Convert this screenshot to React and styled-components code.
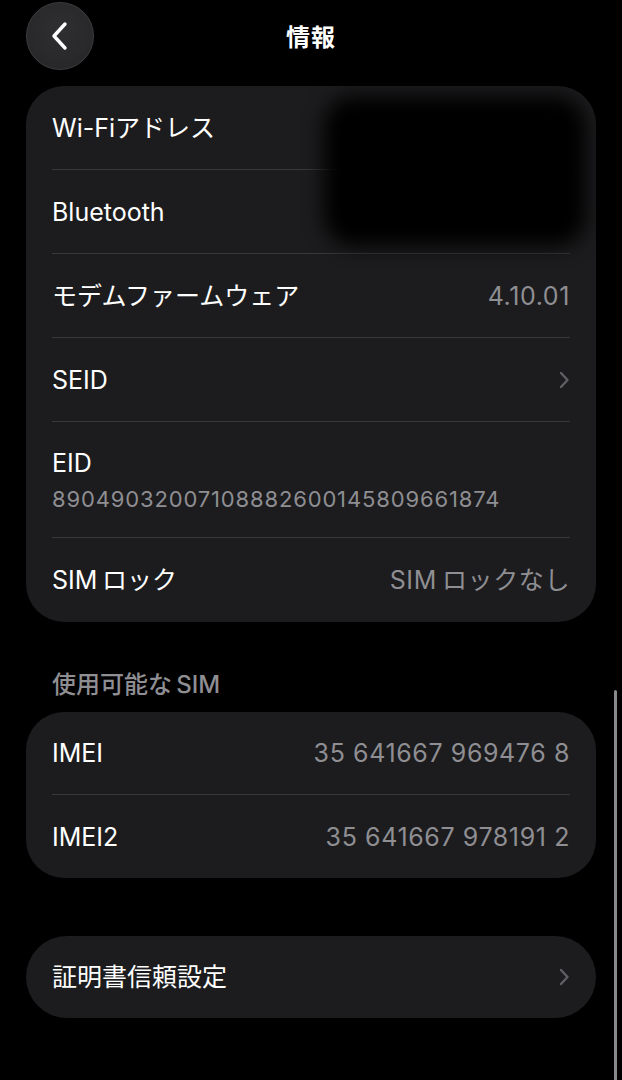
import React from 'react';
import styled, { createGlobalStyle } from 'styled-components';

const Global = createGlobalStyle`
  html, body {
    margin: 0;
    padding: 0;
    background: #000;
  }
  body {
    font-family: Inter, "Noto Sans CJK JP", sans-serif;
    color: #fff;
    -webkit-font-smoothing: antialiased;
  }
`

const Page = styled.div`
  width: 622px;
  min-height: 1080px;
  box-sizing: border-box;
  padding: 1px 26px 0;
  background: #000;
  overflow: hidden;
`

const Header = styled.div`
  display: grid;
  grid-template-columns: 68px 1fr 68px;
  align-items: center;
  height: 69px;
`

const BackButton = styled.button`
  width: 68px;
  height: 68px;
  border-radius: 50%;
  border: 1px solid #3d3d40;
  background: radial-gradient(circle at 50% 40%, #2f2f31 0%, #252527 100%);
  display: flex;
  align-items: center;
  justify-content: center;
  padding: 0;
`

const Title = styled.h1`
  margin: 0;
  text-align: center;
  font-size: 24px;
  font-weight: 700;
  letter-spacing: 1px;
`

const Card = styled.div`
  position: relative;
  background: #1c1c1e;
  border-radius: ${p => p.$radius || 38}px;
  margin-top: ${p => p.$top || 0}px;
  padding: 0 26px;
  overflow: hidden;
`

const Row = styled.div`
  display: flex;
  flex-direction: ${p => (p.$stacked ? 'column' : 'row')};
  justify-content: ${p => (p.$stacked ? 'center' : 'space-between')};
  align-items: ${p => (p.$stacked ? 'flex-start' : 'center')};
  height: ${p => p.$h || 84}px;
  box-sizing: border-box;
  border-bottom: ${p => (p.$last ? 'none' : '1px solid #38383b')};
`

const Label = styled.span`
  font-size: 25px;
  color: #fff;
  line-height: 32px;
`

const Value = styled.span`
  font-size: 25px;
  color: #8e8e93;
  line-height: 32px;
  letter-spacing: 0.6px;
`

const SubValue = styled.span`
  font-size: 22px;
  color: #8e8e93;
  line-height: 28px;
  margin-top: 6px;
  letter-spacing: 0.85px;
`

const SectionTitle = styled.div`
  font-size: 24px;
  font-weight: 500;
  color: #8e8e93;
  line-height: 28px;
  margin: 49px 0 13px;
  padding-left: 26px;
`

const Redaction = styled.div`
  position: absolute;
  left: 298px;
  top: 10px;
  width: 262px;
  height: 150px;
  background: #000;
  border-radius: 30px;
  filter: blur(10px);
`

const Scrollbar = styled.div`
  position: fixed;
  left: 614px;
  top: 690px;
  width: 3px;
  height: 400px;
  border-radius: 2px;
  background: #8a8a8e;
`

const Chevron = () => (
  <svg width="12" height="20" viewBox="0 0 12 20">
    <path d="M3 3 L9.5 10 L3 17" fill="none" stroke="#5f5f63" strokeWidth="2.4" strokeLinecap="round" strokeLinejoin="round" />
  </svg>
)

const BackIcon = () => (
  <svg width="20" height="30" viewBox="0 0 20 30">
    <path d="M15 3 L4 15 L15 27" fill="none" stroke="#fff" strokeWidth="3.4" strokeLinecap="round" strokeLinejoin="round" />
  </svg>
)

const App = () => {
  return (
    <Page>
      <Global />
      <Header>
        <BackButton aria-label="戻る"><BackIcon /></BackButton>
        <Title>情報</Title>
        <div />
      </Header>

      <Card $top={16}>
        <Row><Label>Wi-Fiアドレス</Label></Row>
        <Row><Label>Bluetooth</Label></Row>
        <Row><Label>モデムファームウェア</Label><Value>4.10.01</Value></Row>
        <Row><Label>SEID</Label><Chevron /></Row>
        <Row $stacked $h={116}>
          <Label>EID</Label>
          <SubValue>89049032007108882600145809661874</SubValue>
        </Row>
        <Row $last><Label>SIM{'\u2009'}ロック</Label><Value>SIM{'\u2009'}ロックなし</Value></Row>
        <Redaction />
      </Card>

      <SectionTitle>使用可能な{'\u2009'}SIM</SectionTitle>
      <Card>
        <Row $h={83}><Label>IMEI</Label><Value>35 641667 969476 8</Value></Row>
        <Row $h={83} $last><Label>IMEI2</Label><Value>35 641667 978191 2</Value></Row>
      </Card>

      <Card $top={58} $radius={41}>
        <Row $h={82} $last><Label>証明書信頼設定</Label><Chevron /></Row>
      </Card>

      <Scrollbar />
    </Page>
  );
};

export default App;
